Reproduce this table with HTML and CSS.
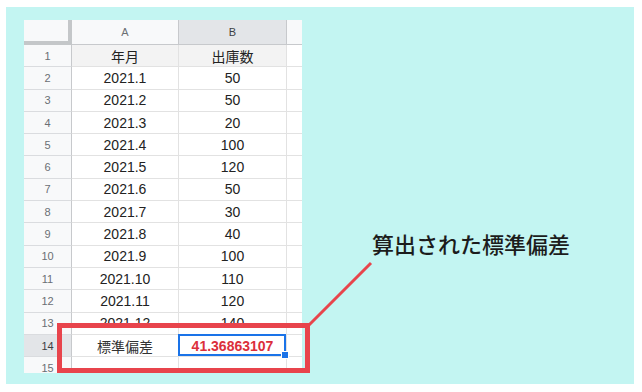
FILE: index.html
```html
<!DOCTYPE html>
<html lang="ja">
<head>
<meta charset="utf-8">
<link rel="stylesheet" href="styles.css">
</head>
<body>
<div class="panel">
  <div class="sheet">
    <div class="corner"></div>
    <div class="colhead">A</div>
    <div class="colhead sel">B</div>
    <div class="colhead last"></div>

    <div class="rowhead">1</div><div class="cell title">年月</div><div class="cell title">出庫数</div><div class="cell last"></div>
    <div class="rowhead">2</div><div class="cell">2021.1</div><div class="cell">50</div><div class="cell last"></div>
    <div class="rowhead">3</div><div class="cell">2021.2</div><div class="cell">50</div><div class="cell last"></div>
    <div class="rowhead">4</div><div class="cell">2021.3</div><div class="cell">20</div><div class="cell last"></div>
    <div class="rowhead">5</div><div class="cell">2021.4</div><div class="cell">100</div><div class="cell last"></div>
    <div class="rowhead">6</div><div class="cell">2021.5</div><div class="cell">120</div><div class="cell last"></div>
    <div class="rowhead">7</div><div class="cell">2021.6</div><div class="cell">50</div><div class="cell last"></div>
    <div class="rowhead">8</div><div class="cell">2021.7</div><div class="cell">30</div><div class="cell last"></div>
    <div class="rowhead">9</div><div class="cell">2021.8</div><div class="cell">40</div><div class="cell last"></div>
    <div class="rowhead">10</div><div class="cell">2021.9</div><div class="cell">100</div><div class="cell last"></div>
    <div class="rowhead">11</div><div class="cell">2021.10</div><div class="cell">110</div><div class="cell last"></div>
    <div class="rowhead">12</div><div class="cell">2021.11</div><div class="cell">120</div><div class="cell last"></div>
    <div class="rowhead">13</div><div class="cell">2021.12</div><div class="cell">140</div><div class="cell last"></div>
    <div class="rowhead sel">14</div><div class="cell jp">標準偏差</div><div class="cell active">41.36863107<span class="handle"></span></div><div class="cell last"></div>
    <div class="rowhead">15</div><div class="cell"></div><div class="cell"></div><div class="cell last"></div>
  </div>
  <div class="callout">算出された標準偏差</div>
  <div class="highlight"></div>
  <svg class="leader" width="628" height="377" viewBox="0 0 628 377">
    <line x1="302" y1="319" x2="365" y2="256" stroke="#e8444c" stroke-width="3"/>
  </svg>
</div>
</body>
</html>
```

FILE: styles.css
```css
html, body {
  margin: 0;
  padding: 0;
  background: #ffffff;
}

body {
  padding: 7px 0 0 6px;
  font-family: "Liberation Sans", Arial, "Noto Sans CJK JP", sans-serif;
}

.panel {
  position: relative;
  width: 628px;
  height: 377px;
  background: #c3f5f2;
  box-sizing: border-box;
  padding: 13px 0 0 18px;
  display: flex;
  align-items: flex-start;
}

.sheet {
  width: 278px;
  height: 353px;
  overflow: hidden;
  background: #ffffff;
  display: grid;
  grid-template-columns: 48px 107px 108px 15px;
  grid-template-rows: 25px repeat(15, 22.3px);
  flex: none;
}

.sheet > div {
  box-sizing: border-box;
  display: flex;
  align-items: center;
  justify-content: center;
  overflow: hidden;
  white-space: nowrap;
}

.corner {
  background: #f8f9fa;
  border-right: 4px solid #c4c7c9;
  border-bottom: 4px solid #c4c7c9;
}

.colhead {
  background: #f8f9fa;
  border-right: 1px solid #c7c9cc;
  border-bottom: 1px solid #c7c9cc;
  color: #6b6f74;
  font-size: 11px;
}

.colhead.sel {
  background: #e3e5e8;
  color: #3c4043;
}

.colhead.last {
  border-right: none;
}

.rowhead {
  background: #f8f9fa;
  border-right: 1px solid #c7c9cc;
  border-bottom: 1px solid #dadcdf;
  color: #6b6f74;
  font-size: 11px;
}

.rowhead.sel {
  background: #e3e5e8;
  color: #3c4043;
}

.cell {
  border-right: 1px solid #e2e2e2;
  border-bottom: 1px solid #e2e2e2;
  color: #222222;
  font-size: 14px;
}

.cell.last {
  border-right: none;
}

.cell.title {
  background: #f3f3f3;
  font-family: "Noto Sans CJK JP", sans-serif;
  font-size: 14px;
}

.cell.jp {
  font-family: "Noto Sans CJK JP", sans-serif;
  font-size: 14px;
  color: #333333;
}

.cell.active {
  position: relative;
  color: #dc2f3b;
  font-weight: bold;
  overflow: visible;
}

.cell.active::after {
  content: "";
  position: absolute;
  left: -1px;
  top: -1px;
  right: 0;
  bottom: 0;
  border: 2px solid #1a73e8;
}

.handle {
  position: absolute;
  right: -3px;
  bottom: -3px;
  width: 6px;
  height: 6px;
  background: #1a73e8;
  border: 1px solid #ffffff;
  z-index: 2;
}

.callout {
  margin: 210px 0 0 70px;
  font-family: "Noto Sans CJK JP", sans-serif;
  font-size: 22px;
  line-height: 26px;
  font-weight: 500;
  color: #1c1c1c;
  white-space: nowrap;
}

.highlight {
  position: absolute;
  left: 51px;
  top: 316px;
  width: 253px;
  height: 50px;
  box-sizing: border-box;
  border: 5px solid #e8444c;
}

.leader {
  position: absolute;
  left: 0;
  top: 0;
  pointer-events: none;
}
```
